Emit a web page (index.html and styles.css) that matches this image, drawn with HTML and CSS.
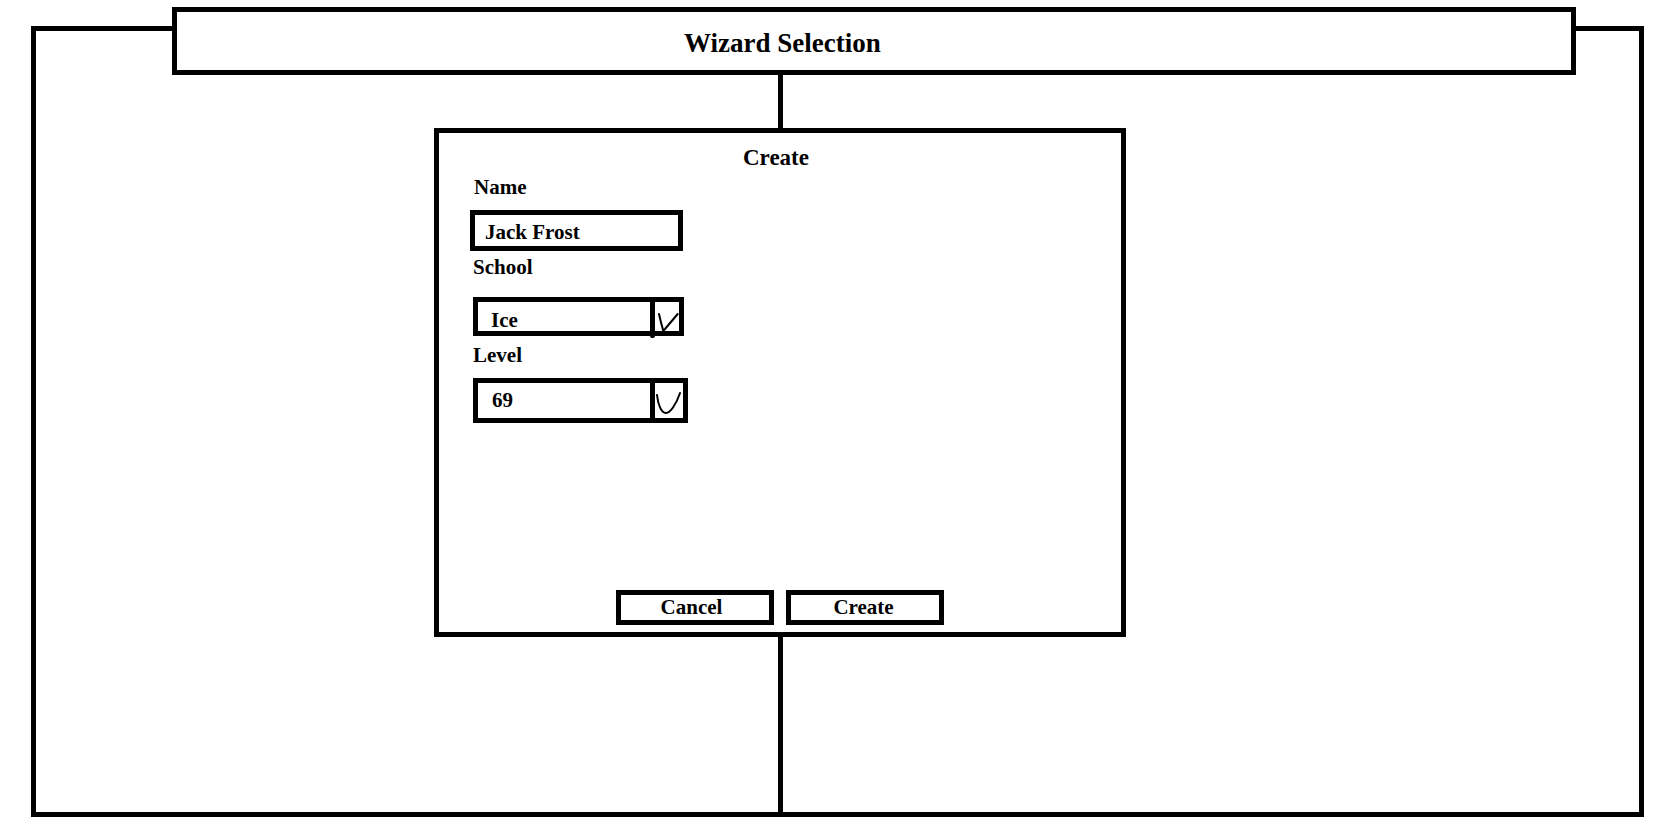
FILE: index.html
```html
<!DOCTYPE html>
<html lang="en">
<head>
<meta charset="utf-8">
<title>Wizard Selection</title>
<link rel="stylesheet" href="styles.css">
</head>
<body>
<div class="frame">
  <header class="titlebar">Wizard Selection</header>
  <div class="stem stem-top"></div>
  <section class="dialog">
    <h2 class="dialog-title">Create</h2>
    <div class="form">
      <div class="label label-name">Name</div>
      <div class="field field-name">Jack Frost</div>
      <div class="label label-school">School</div>
      <div class="select select-school">
        <div class="select-value">Ice</div>
        <span class="select-divider divider-long"></span>
        <div class="select-arrow">
          <svg width="24" height="29" viewBox="0 0 24 29"><path d="M4 12 Q6 21 8.3 29 L22.7 12" fill="none" stroke="#000" stroke-width="2" stroke-linecap="round" stroke-linejoin="round"/></svg>
        </div>
      </div>
      <div class="label label-level">Level</div>
      <div class="select select-level">
        <div class="select-value">69</div>
        <span class="select-divider"></span>
        <div class="select-arrow">
          <svg width="28" height="35" viewBox="0 0 28 35"><path d="M2 12 C3 21 6 30 11 30 C15 30 21 22 25 10" fill="none" stroke="#000" stroke-width="2" stroke-linecap="round" stroke-linejoin="round"/></svg>
        </div>
      </div>
    </div>
    <div class="actions">
      <button class="btn btn-cancel" type="button">Cancel</button>
      <button class="btn btn-create" type="button">Create</button>
    </div>
  </section>
  <div class="stem stem-bottom"></div>
</div>
</body>
</html>
```

FILE: styles.css
```css
html, body {
  margin: 0;
  padding: 0;
  background: #fff;
}

body {
  font-family: "Liberation Serif", "Times New Roman", serif;
  font-weight: bold;
  color: #000;
}

.frame {
  box-sizing: border-box;
  width: 1613px;
  height: 791px;
  margin: 26px 0 0 31px;
  border: 5px solid #000;
}

.titlebar {
  box-sizing: border-box;
  width: 1404px;
  height: 68px;
  margin: -24px 0 0 136px;
  border: 5px solid #000;
  background: #fff;
  padding: 18px 0 0 507px;
  font-size: 27px;
  line-height: 27px;
}

.stem {
  width: 5px;
  margin-left: 742px;
  background: #000;
}

.stem-top {
  height: 53px;
}

.stem-bottom {
  height: 182px;
}

.dialog {
  box-sizing: border-box;
  width: 692px;
  height: 509px;
  margin-left: 398px;
  border: 5px solid #000;
  background: #fff;
  display: flex;
  flex-direction: column;
}

.dialog-title {
  margin: 13px 0 0;
  padding-right: 8px;
  text-align: center;
  font-size: 23px;
  line-height: 23px;
  font-weight: bold;
}

.form {
  display: flex;
  flex-direction: column;
  align-items: flex-start;
  padding-left: 34px;
}

.label {
  font-size: 21px;
  line-height: 21px;
}

.label-name {
  margin: 8px 0 0 1px;
}

.label-school {
  margin-top: 6px;
}

.label-level {
  margin-top: 9px;
}

.field {
  box-sizing: border-box;
  width: 213px;
  height: 41px;
  margin: 12px 0 0 -3px;
  border: 5px solid #000;
  padding: 7px 0 0 10px;
  font-size: 21px;
  line-height: 21px;
}

.select {
  box-sizing: border-box;
  display: flex;
  border: 5px solid #000;
  font-size: 21px;
  line-height: 21px;
}

.select-school {
  width: 211px;
  height: 39px;
  margin-top: 19px;
}

.select-level {
  width: 215px;
  height: 45px;
  margin-top: 12px;
}

.select-value {
  width: 172px;
  padding-left: 13px;
  box-sizing: border-box;
}

.select-school .select-value {
  padding-top: 8px;
}

.select-level .select-value {
  padding-top: 7px;
  padding-left: 14px;
}

.select-divider {
  width: 5px;
  background: #000;
}

.divider-long {
  margin-bottom: -7px;
  border-radius: 0 0 2px 2px;
}

.select-arrow {
  flex: 1;
  display: flex;
}

.select-arrow svg {
  display: block;
  overflow: visible;
}

.actions {
  margin-top: auto;
  padding-bottom: 7px;
  display: flex;
  justify-content: center;
  gap: 12px;
}

.btn {
  box-sizing: border-box;
  width: 158px;
  height: 35px;
  margin: 0;
  padding: 0;
  border: 5px solid #000;
  background: #fff;
  color: #000;
  font-family: "Liberation Serif", "Times New Roman", serif;
  font-weight: bold;
  font-size: 21px;
  line-height: 21px;
}

.btn-cancel {
  padding-right: 7px;
}

.btn-create {
  padding-right: 3px;
}
```
